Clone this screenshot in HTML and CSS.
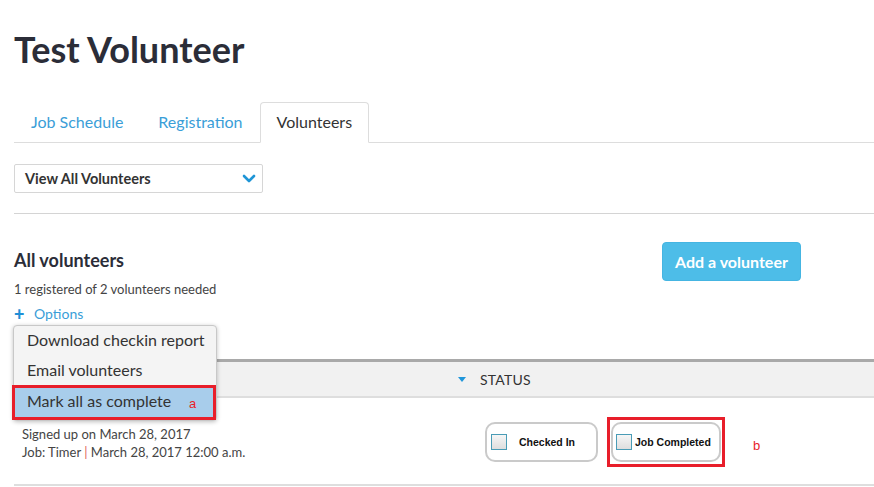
FILE: index.html
```html
<!DOCTYPE html>
<html>
<head>
<meta charset="utf-8">
<link rel="stylesheet" href="styles.css">
</head>
<body>
<div class="page">
  <h1 class="title">Test Volunteer</h1>

  <ul class="tabs">
    <li class="tab">Job Schedule</li>
    <li class="tab">Registration</li>
    <li class="tab active">Volunteers</li>
  </ul>

  <div class="select">
    <span>View All Volunteers</span>
    <svg class="chev" width="14" height="9" viewBox="0 0 14 9"><path d="M2 2 L7 7 L12 2" fill="none" stroke="#1f95d6" stroke-width="2.6" stroke-linecap="round" stroke-linejoin="round"/></svg>
  </div>

  <div class="divider"></div>

  <div class="summary">
    <div class="summary-left">
      <h2 class="section-title">All volunteers</h2>
      <p class="count">1 registered of 2 volunteers needed</p>
      <div class="options">
        <span class="plus">+</span><span class="options-label">Options</span>
        <div class="menu">
          <div class="menu-item">Download checkin report</div>
          <div class="menu-item">Email volunteers</div>
          <div class="menu-item selected">Mark all as complete<span class="note note-a">a</span></div>
        </div>
      </div>
    </div>
    <button class="add-btn">Add a volunteer</button>
  </div>

  <div class="table">
    <div class="thead">
      <div class="th th-name"><span class="caret"></span></div>
      <div class="th th-status">STATUS</div>
    </div>
    <div class="row">
      <div class="cell cell-name">
        <div class="vname">&nbsp;</div>
        <div class="meta">Signed up on March 28, 2017</div>
        <div class="meta">Job: Timer <span class="pipe">|</span> March 28, 2017 12:00 a.m.</div>
      </div>
      <div class="cell cell-status">
        <div class="status-btn checked-in"><span class="box"></span><span class="status-label">Checked In</span></div>
        <div class="highlight">
          <div class="status-btn completed"><span class="box"></span><span class="status-label">Job Completed</span></div>
        </div>
        <span class="note note-b">b</span>
      </div>
    </div>
  </div>
</div>
</body>
</html>
```

FILE: styles.css
```css
* { box-sizing: border-box; }
html, body { margin: 0; padding: 0; background: #fff; }
body {
  font-family: Lato, "Open Sans", Arial, sans-serif;
  color: #333;
  width: 874px;
  overflow: hidden;
}
.page { padding-left: 14px; }

.title {
  margin: 27px 0 0 0;
  font-size: 36px;
  line-height: 44px;
  font-weight: 700;
  color: #2b2d38;
}

.tabs {
  list-style: none;
  margin: 31px 0 0 0;
  padding: 0;
  display: flex;
  border-bottom: 1px solid #ddd;
  height: 41px;
}
.tab {
  padding: 0 16px 0 16px;
  height: 41px;
  line-height: 38px;
  font-size: 16px;
  color: #3a9ed8;
  border: 1px solid transparent;
  border-radius: 4px 4px 0 0;
}
.tab:first-child { padding-right: 17px; }
.tab.active {
  color: #333;
  border-color: #ddd;
  border-bottom-color: #fff;
  background: #fff;
}

.select {
  margin-top: 21px;
  width: 249px;
  height: 29px;
  border: 1px solid #d6d6d6;
  border-radius: 2px;
  display: flex;
  align-items: center;
  justify-content: space-between;
  padding: 0 6px 0 10px;
  font-size: 14.5px;
  font-weight: 700;
  color: #333;
}
.chev { display: block; }

.divider {
  margin-top: 20px;
  border-top: 1px solid #d4d4d4;
}

.summary {
  display: flex;
  justify-content: space-between;
  align-items: flex-start;
  padding-right: 73px;
}
.section-title {
  margin: 34px 0 0 0;
  font-size: 18px;
  line-height: 24px;
  font-weight: 700;
  color: #2b2d38;
}
.count {
  margin: 9px 0 0 0;
  font-size: 13px;
  line-height: 16px;
  color: #444;
}
.options {
  position: relative;
  margin-top: 8px;
  font-size: 14px;
  line-height: 18px;
  color: #3a9ed8;
  display: flex;
  align-items: center;
}
.plus {
  font-weight: 900;
  font-size: 18px;
  color: #1f8fd6;
  width: 20px;
}

.menu {
  position: absolute;
  left: -1px;
  top: 20px;
  width: 204px;
  background: #f4f4f4;
  border: 1px solid #c8c8c8;
  border-radius: 4px;
  box-shadow: 0 1px 4px rgba(0,0,0,0.25);
  z-index: 5;
}
.menu-item {
  height: 30px;
  line-height: 28px;
  padding-left: 13px;
  font-size: 16px;
  color: #333;
  white-space: nowrap;
  position: relative;
}
.menu-item.selected {
  background: #a8cdeb;
  outline: 3px solid #e81e2a;
  outline-offset: -2px;
  height: 33px;
  line-height: 30px;
  margin: 0 1px 1px -1px;
  padding-left: 14px;
}
.note {
  color: #e81e2a;
  font-family: Arial, "Liberation Sans", sans-serif;
  font-size: 13px;
}
.note-a { position: absolute; left: 176px; top: 3px; }

.add-btn {
  margin-top: 28px;
  width: 139px;
  height: 39px;
  background: #4dbde8;
  border: 1px solid #45b5e2;
  border-radius: 4px;
  color: #fff;
  font-family: Lato, Arial, sans-serif;
  font-weight: 700;
  font-size: 16px;
  padding: 0;
}

.table { margin-top: 36px; }
.thead {
  display: flex;
  height: 39px;
  background: #f1f1f1;
  border-top: 3px solid #a9a9a9;
  border-bottom: 2px solid #dedede;
  align-items: center;
}
.th-name {
  width: 466px;
  display: flex;
  justify-content: flex-end;
  padding-right: 14px;
}
.caret {
  width: 0; height: 0;
  border-left: 4.5px solid transparent;
  border-right: 4.5px solid transparent;
  border-top: 5px solid #2096da;
  margin-top: 1px;
}
.th-status {
  font-size: 14px;
  color: #333;
  letter-spacing: 0.2px;
}

.row {
  display: flex;
  height: 88px;
  border-bottom: 2px solid #dedede;
}
.cell-name {
  width: 466px;
  padding-left: 8px;
  padding-top: 11px;
}
.vname { font-size: 14px; line-height: 16px; }
.meta {
  font-size: 13px;
  line-height: 18px;
  color: #444;
}
.pipe { color: #e0625a; }

.cell-status {
  display: flex;
  align-items: flex-start;
  padding-left: 5px;
  padding-top: 24px;
  position: relative;
}
.status-btn {
  height: 40px;
  border: 2px solid #cacaca;
  border-radius: 10px;
  display: flex;
  align-items: center;
  background: #fff;
  font-family: Arial, "Liberation Sans", sans-serif;
  font-weight: 700;
  font-size: 10.5px;
  color: #111;
}
.box {
  width: 16px;
  height: 16px;
  border: 1.5px solid #4a9cb6;
  background: linear-gradient(#f6f6f6, #dedede);
}
.checked-in { width: 113px; padding-left: 4px; }
.checked-in .status-label { margin-left: 12px; }
.highlight {
  margin-left: 9px;
  margin-top: -5px;
  border: 3px solid #e81e2a;
  padding: 2px 1px;
}
.completed { width: 110px; padding-left: 3px; }
.completed .status-label { margin-left: 3px; }
.note-b { margin-left: 28px; margin-top: 16px; }
```
